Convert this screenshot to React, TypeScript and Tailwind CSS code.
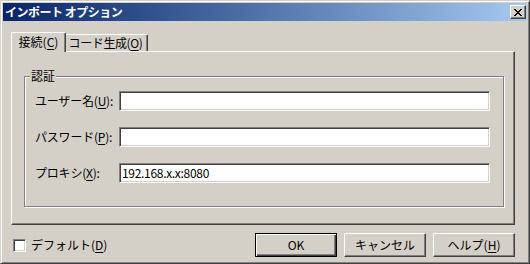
import React from 'react';

const raised =
  'border border-t-white border-l-white border-r-[#404040] border-b-[#404040] shadow-[inset_-1px_-1px_#808080]';
const sunken =
  'border border-t-[#808080] border-l-[#808080] border-r-white border-b-white shadow-[inset_1px_1px_#404040,inset_-1px_-1px_#d4d0c8] bg-white';

const Key = ({ children }: { children: React.ReactNode }) => (
  <span className="underline underline-offset-[2px]">{children}</span>
);

const Field = ({ label, value }: { label: React.ReactNode; value?: string }) => (
  <div className="flex items-center h-[20px]">
    <div className="w-[84px] leading-[14px] tracking-[-0.2px]">{label}</div>
    <div className={`w-[371px] h-[20px] flex items-center pl-[2px] leading-[14px] tracking-[-0.3px] ${sunken}`}>
      {value}
    </div>
  </div>
);

export default function App() {
  return (
    <div className="w-[530px] h-[264px] bg-[#d4d0c8] border border-t-[#d4d0c8] border-l-[#d4d0c8] border-r-[#404040] border-b-[#404040] shadow-[inset_1px_1px_#fff,inset_-1px_-1px_#808080] p-[2px] flex flex-col text-[12px] text-black font-['Noto_Sans_CJK_JP',sans-serif] select-none">
      {/* title bar */}
      <div className="h-[18px] bg-linear-to-r from-[#0a246a] to-[#a6caf0] flex items-center justify-between pl-[2px] pr-[1px]">
        <span className="text-white font-bold leading-[14px] tracking-[-0.5px]">インポート オプション</span>
        <div className={`w-[16px] h-[14px] bg-[#d4d0c8] flex items-center justify-center ${raised}`}>
          <svg width="8" height="7" viewBox="0 0 8 7" shapeRendering="crispEdges">
            <path d="M0 0h2v1h-2zM6 0h2v1h-2zM1 1h2v1h-2zM5 1h2v1h-2zM2 2h4v1h-4zM3 3h2v1h-2zM2 4h4v1h-4zM1 5h2v1h-2zM5 5h2v1h-2zM0 6h2v1h-2zM6 6h2v1h-2z" fill="#000" />
          </svg>
        </div>
      </div>

      {/* tabs */}
      <div className="mt-[11px] ml-[8px] w-[504px]">
        <div className="flex items-end h-[19px]">
          <div className="relative z-10 -mb-px h-[20px] w-[55px] bg-[#d4d0c8] border-t border-l border-r border-t-white border-l-white border-r-[#404040] shadow-[inset_-1px_0_#808080] rounded-tl-[2px] rounded-tr-[2px] flex items-center justify-center leading-[14px] pb-[1px]">
            接続(<Key>C</Key>)
          </div>
          <div className="h-[17px] w-[82px] border-t border-r border-t-white border-r-[#404040] shadow-[inset_-1px_0_#808080] rounded-tr-[2px] flex items-center justify-center leading-[14px] tracking-[-0.4px] pr-[2px]">
            コード生成(<Key>O</Key>)
          </div>
        </div>

        <div className={`h-[174px] pt-[24px] pl-[12px] ${raised}`}>
          <div className="relative w-[480px] h-[131px] border border-[#808080] shadow-[inset_1px_1px_#fff,1px_1px_#fff] pt-[14px] pl-[10px] flex flex-col gap-[16px]">
            <span className="absolute left-[5px] -top-[8px] px-[1px] bg-[#d4d0c8] leading-[14px]">認証</span>
            <Field label={<>ユーザー名(<Key>U</Key>):</>} />
            <Field label={<>パスワード(<Key>P</Key>):</>} />
            <Field label={<>プロキシ(<Key>X</Key>):</>} value="192.168.x.x:8080" />
          </div>
        </div>
      </div>

      {/* bottom row */}
      <div className="mt-[8px] h-[24px] flex items-center pl-[10px] pr-[12px]">
        <div className={`w-[13px] h-[13px] ${sunken}`} />
        <span className="ml-[5px] leading-[14px]">
          デフォルト(<Key>D</Key>)
        </span>
        <div className="ml-auto flex gap-[7px]">
          <button className="w-[82px] h-[24px] bg-[#d4d0c8] border border-black shadow-[inset_1px_1px_#fff,inset_-1px_-1px_#404040,inset_-2px_-2px_#808080] flex items-center justify-center leading-[14px]">
            OK
          </button>
          <button className={`w-[82px] h-[24px] bg-[#d4d0c8] flex items-center justify-center leading-[14px] ${raised}`}>
            キャンセル
          </button>
          <button className={`w-[82px] h-[24px] bg-[#d4d0c8] flex items-center justify-center leading-[14px] ${raised}`}>
            ヘルプ(<Key>H</Key>)
          </button>
        </div>
      </div>
    </div>
  );
}
